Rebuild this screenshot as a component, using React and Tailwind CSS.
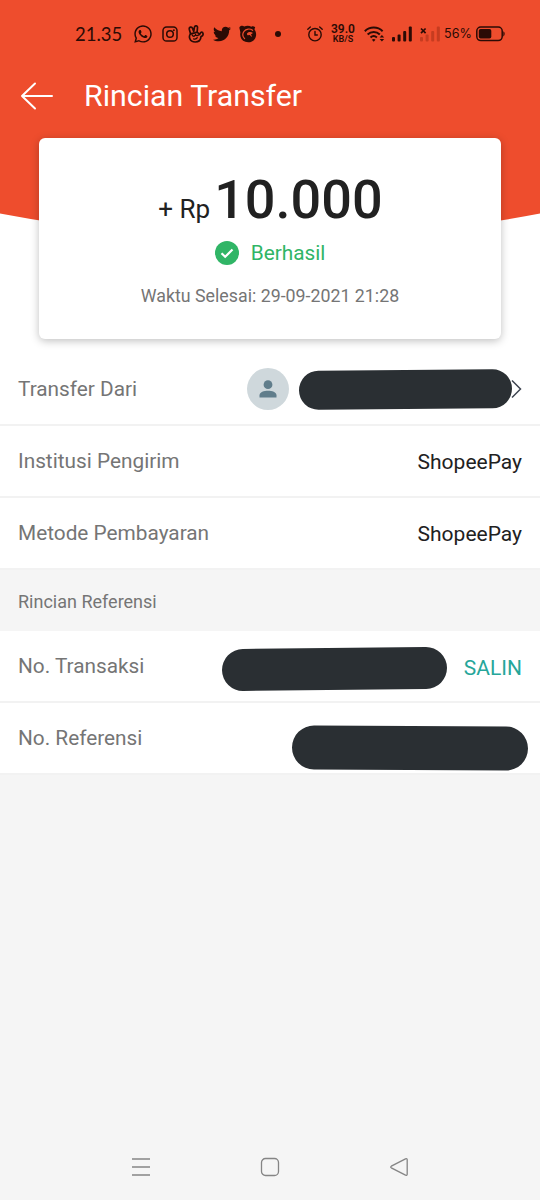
import React from 'react';
import { FaWhatsapp, FaTwitter } from 'react-icons/fa';

function InstagramIcon() {
  return (
    <svg viewBox="0 0 16 16" className="ml-[9px] h-4 w-4 shrink-0" fill="none" stroke="currentColor" strokeWidth="1.5">
      <rect x="1" y="1" width="14" height="14" rx="3.6" />
      <circle cx="8" cy="8" r="3.3" />
      <circle cx="11.9" cy="4.2" r="0.9" fill="currentColor" stroke="none" />
    </svg>
  );
}

function PeaceIcon() {
  return (
    <svg viewBox="0 0 16 18" className="ml-[10px] h-[18px] w-4 shrink-0" fill="none" stroke="currentColor" strokeWidth="1.7" strokeLinejoin="round" strokeLinecap="round">
      <path d="M2.6 9 1.3 4.200C.9 2 3.800 1.200 4.500 3.200l1.200 3.300L6.400 2.300c.3-2.100 3.300-1.900 3.100.2L9.100 7.400" />
      <path d="M2.600 8.800C.4 11.200 1.300 17 7.200 17c4.200 0 5.600-3 5.800-5.400l1.500-.9c1-1.100.8-3.500-.9-3.500-1.300 0-1.300 1.700-2.300 2.400C10.600 7.400 8.400 6.700 6.800 7.800Z" />
      <path d="M4.200 9.800c.2 1.600 1.900 1.900 2.500.8M7.400 9.200c.3 1.800 2.200 1.900 3 .8M5.600 13.900c1.500.5 2.900.1 3.700-1.200" strokeWidth="1.300" />
    </svg>
  );
}

function BrowserIcon() {
  return (
    <svg viewBox="0 0 18 18" className="ml-[8px] h-[18px] w-[18px] shrink-0">
      <path fill="currentColor" d="M.4 2.200C2 .4 4 .6 5.200 1.500c2.400-1 5-.9 7.200.2 1-.7 2.600-.5 3.800.5-.4.900-.7 1.600-.6 2.500 2 2.800 2 6.500.2 9.200-2 3-6 4.100-9.400 2.900C2.300 15.300.5 11.400 1.400 7.400 1.200 5.500.3 3.800.4 2.200Z" />
      <path fill="none" stroke="#ee4d2d" strokeWidth="1.200" strokeLinecap="round" d="M13.600 5.300C11 3.300 7 3.600 5 6.300c-1.700 2.300-1.300 5.300.6 7.300" />
      <path fill="#ee4d2d" d="M8 8.400c1.600-1.700 4.200-1.700 6-.5l-2.200 1.500c1 .6 1.200 1.700.4 2.600-.6-1.700-1.700-2.100-2.700-1.800-1 .3-1.700-.6-1.500-1.800Z" />
    </svg>
  );
}

function AlarmIcon() {
  return (
    <svg viewBox="0 0 16 16" className="h-4 w-4 shrink-0" fill="none" stroke="currentColor" strokeWidth="1.4" strokeLinecap="round">
      <circle cx="8" cy="8.700" r="6.200" />
      <path d="M8 5.500v3.500h2.300M.8 3.300 3.300 1M15.200 3.300 12.700 1" />
    </svg>
  );
}

function WifiIcon() {
  return (
    <svg viewBox="0 0 21 16" className="ml-[8px] h-4 w-[21px] shrink-0" fill="none" stroke="currentColor" strokeWidth="2">
      <path d="M.8 5.200C5.800.4 13.700.4 18.600 5.200M3.600 8.500c3.500-3.300 8.800-3.300 12.200 0M6.500 11.500c1.900-1.700 4.500-1.700 6.400 0" />
      <path d="M9.700 15.700 7.900 13.700c1-1 2.600-1 3.600 0Z" fill="currentColor" stroke="none" />
      <path d="m15.600 11.500 2.300-2.500 2.300 2.500ZM15.600 13l2.300 2.500 2.300-2.500Z" fill="currentColor" stroke="none" />
    </svg>
  );
}

function Signal() {
  return (
    <svg viewBox="0 0 20 16" className="ml-[7px] h-4 w-5 shrink-0" fill="currentColor">
      <rect x="0" y="11" width="3" height="4.500" rx="1" />
      <rect x="5.600" y="8.500" width="3" height="7" rx="1" />
      <rect x="11.200" y="5" width="3" height="10.500" rx="1" />
      <rect x="16.800" y="0.500" width="3" height="15" rx="1" />
    </svg>
  );
}

function NoSignal() {
  return (
    <svg viewBox="0 0 20 16" className="ml-2 h-4 w-5 shrink-0">
      <g fill="#c63c20">
        <rect x="0" y="11" width="3" height="4.500" rx="1" />
        <rect x="5.600" y="8.500" width="3" height="7" rx="1" />
        <rect x="11.200" y="5" width="3" height="10.500" rx="1" />
        <rect x="16.800" y="0.500" width="3" height="15" rx="1" />
      </g>
      <path d="m1 2.500 4.600 4.600M5.600 2.500 1 7.100" stroke="currentColor" strokeWidth="1.700" />
    </svg>
  );
}

function Battery() {
  return (
    <svg viewBox="0 0 29 16" className="ml-1 h-4 w-[29px] shrink-0">
      <rect x="0.800" y="1" width="25.400" height="13.600" rx="4" fill="none" stroke="currentColor" strokeWidth="1.500" />
      <rect x="2.800" y="3" width="12.500" height="9.600" rx="1.800" fill="currentColor" />
      <path d="M27.300 5.200c1.800.8 1.800 4.400 0 5.200Z" fill="currentColor" />
    </svg>
  );
}

function StatusBar() {
  return (
    <div className="flex h-[68px] items-center pl-[75px] text-[#2b0b05]">
      <span className="w-[47px] shrink-0 font-['Lato'] text-[18.500px] leading-none">21.35</span>
      <FaWhatsapp size={20} className="ml-[11px] shrink-0" />
      <InstagramIcon />
      <PeaceIcon />
      <FaTwitter size={18} className="ml-[9px] shrink-0" />
      <BrowserIcon />
      <span className="ml-[18px] mr-[26px] h-1.5 w-1.5 shrink-0 rounded-full bg-current" />
      <AlarmIcon />
      <div className="ml-[7px] flex w-[26px] shrink-0 flex-col items-center font-['Roboto'] font-semibold">
        <span className="text-[12px] leading-[11px]">39.0</span>
        <span className="text-[9px] leading-[9px]">KB/S</span>
      </div>
      <WifiIcon />
      <Signal />
      <NoSignal />
      <span className="ml-[4px] w-[28px] shrink-0 font-['Inter'] text-[12.600px] leading-none">56%</span>
      <Battery />
    </div>
  );
}

function Header() {
  return (
    <div className="flex h-[70px] items-start pl-5 text-white">
      <svg viewBox="0 0 34 28" className="mt-[14px] h-7 w-[34px]" fill="none" stroke="currentColor" strokeWidth="2" strokeLinecap="round" strokeLinejoin="round">
        <path d="M32 14H2M15 1.500 2 14l13 12.500" />
      </svg>
      <h1 className="ml-[30px] mt-[10px] text-[30.300px] leading-9">Rincian Transfer</h1>
    </div>
  );
}

function AmountCard() {
  return (
    <div className="mx-[39px] flex h-[201px] flex-col items-center rounded-md bg-white shadow-[0_2px_8px_rgba(0,0,0,0.25)]">
      <div className="mt-[30px] flex items-baseline pl-px text-[#212121]">
        <span className="text-[26px] leading-[64px]">+ Rp</span>
        <span className="ml-1 text-[54px] font-medium leading-[64px]">10.000</span>
      </div>
      <div className="flex h-6 items-center gap-3 text-[#30b566]">
        <svg viewBox="0 0 24 24" className="h-6 w-6">
          <circle cx="12" cy="12" r="12" fill="currentColor" />
          <path d="m6.500 12.200 3.700 3.600 7.300-7.300" fill="none" stroke="#fff" strokeWidth="2.200" />
        </svg>
        <span className="text-[20.800px] leading-6">Berhasil</span>
      </div>
      <span className="mt-[19px] text-[17.8px] leading-6 text-[#757575]">Waktu Selesai: 29-09-2021 21:28</span>
    </div>
  );
}

function Row({ label, children }) {
  return (
    <div className="flex h-[72px] items-center justify-between border-b-2 border-[#f2f2f2] bg-white pl-[18px] pr-[18px]">
      <span className="text-[20.800px] leading-6 text-[#757575]">{label}</span>
      {children}
    </div>
  );
}

function Value({ children }) {
  return <span className="mt-[2px] text-[21px] leading-6 text-[#212121]">{children}</span>;
}

function NavBar() {
  return (
    <div className="mt-auto flex h-[66px] items-center justify-between px-[131px] text-[#858585]">
      <svg viewBox="0 0 20 20" className="h-5 w-5" fill="none" stroke="currentColor" strokeWidth="1.500">
        <path d="M1 2h18M1 10h18M1 18h18" />
      </svg>
      <svg viewBox="0 0 20 20" className="h-5 w-5" fill="none" stroke="currentColor" strokeWidth="1.300">
        <rect x="1.500" y="1.500" width="17" height="17" rx="4" />
      </svg>
      <svg viewBox="0 0 20 20" className="h-5 w-5" fill="none" stroke="currentColor" strokeWidth="1.300" strokeLinejoin="round">
        <path d="M2.300 9.200 16.500 1.800q1.600-.5 1.700 1v14.400q-.1 1.500-1.700 1L2.300 10.800q-1.200-.8 0-1.600Z" />
      </svg>
    </div>
  );
}

export default function App() {
  return (
    <div className="relative isolate flex h-[1200px] w-[540px] flex-col overflow-hidden bg-[#f5f5f5] font-['Roboto',sans-serif]">
      <svg viewBox="0 0 540 354" className="absolute left-0 top-0 -z-10 h-[354px] w-[540px]">
        <rect width="540" height="354" fill="#fff" />
        <path d="M0 0h540v213.500Q270 265 0 213.500Z" fill="#ee4d2d" />
      </svg>

      <StatusBar />
      <Header />
      <AmountCard />

      <div className="mt-[15px]">
        <Row label="Transfer Dari">
          <div className="flex items-center">
            <div className="flex h-[42px] w-[42px] items-center justify-center rounded-full bg-[#cfd8dc]">
              <svg viewBox="0 0 18 18" className="h-[18px] w-[18px]" fill="#607d8b">
                <circle cx="9" cy="4.700" r="4.400" />
                <path d="M.5 17.500v-2.200c0-3.100 4.500-4.500 8.500-4.500s8.500 1.400 8.500 4.500v2.200Z" />
              </svg>
            </div>
            <div className="z-10 ml-[10px] h-[39px] w-[213px] -rotate-[0.500deg] rounded-full bg-[#2a2f33]" />
            <svg viewBox="0 0 12 20" className="-ml-[2px] h-5 w-3" fill="none" stroke="#3f4651" strokeWidth="1.500">
              <path d="m2 1.500 8.500 8.500L2 18.500" />
            </svg>
          </div>
        </Row>
        <Row label="Institusi Pengirim">
          <Value>ShopeePay</Value>
        </Row>
        <Row label="Metode Pembayaran">
          <Value>ShopeePay</Value>
        </Row>
      </div>

      <div className="flex h-[61px] items-center pl-[18px] pt-px text-[18px] text-[#757575]">Rincian Referensi</div>

      <div>
        <Row label="No. Transaksi">
          <div className="flex items-center">
            <div className="mr-[17px] mt-[6px] h-[42px] w-[225px] -rotate-[0.600deg] rounded-full bg-[#2a2f33]" />
            <span className="mt-[3px] text-[21px] leading-6 text-[#26a69a]">SALIN</span>
          </div>
        </Row>
        <Row label="No. Referensi">
          <div className="-mr-[6px] mt-[20px] h-11 w-[236px] rotate-[0.300deg] rounded-full bg-[#2a2f33]" />
        </Row>
      </div>

      <NavBar />
    </div>
  );
}
